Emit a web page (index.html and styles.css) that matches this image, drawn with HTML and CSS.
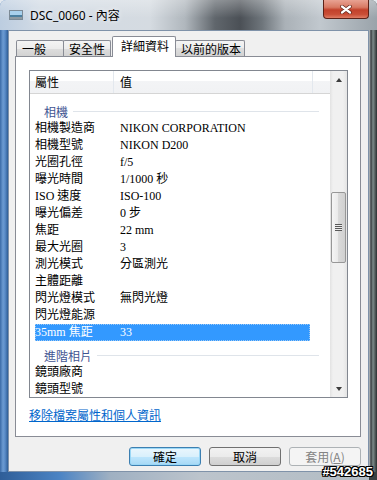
FILE: index.html
```html
<!DOCTYPE html>
<html lang="zh-Hant">
<head>
  <meta charset="UTF-8">
  <title>DSC_0060 - 內容</title>
  <link rel="stylesheet" href="styles.css">
</head>
<body>

<div class="window">
  <div class="titlebar">
    <svg class="title-icon" width="14" height="10" viewBox="0 0 14 10">
      <rect x="0.5" y="0.5" width="13" height="9" fill="#fff" stroke="#7c8a96"/>
      <rect x="1" y="1" width="12" height="4" fill="#a8d0ec"/>
      <rect x="1" y="5" width="12" height="2" fill="#4b7f9f"/>
      <rect x="1" y="7" width="12" height="2" fill="#8e9aa2"/>
    </svg>
    <span class="title">DSC_0060 - 內容</span>
    <button class="close">
      <svg width="12" height="9" viewBox="0 0 12 9">
        <path d="M2 1.5 L10 7.5 M10 1.5 L2 7.5" stroke="#5a1f14" stroke-width="3.6" stroke-linecap="round"/>
        <path d="M2 1.5 L10 7.5 M10 1.5 L2 7.5" stroke="#fff" stroke-width="2.2" stroke-linecap="round"/>
      </svg>
    </button>
  </div>

  <div class="client">
    <div class="tabs">
      <div class="tab">一般</div>
      <div class="tab">安全性</div>
      <div class="tab active">詳細資料</div>
      <div class="tab">以前的版本</div>
    </div>

    <div class="panel">
      <div class="list">
        <div class="list-body">
          <div class="list-head">
            <div class="col col-name">屬性</div>
            <div class="col col-value">值</div>
          </div>
          <div class="group"><span>相機</span></div>
          <div class="row"><span>相機製造商</span><span>NIKON CORPORATION</span></div>
          <div class="row"><span>相機型號</span><span>NIKON D200</span></div>
          <div class="row"><span>光圈孔徑</span><span>f/5</span></div>
          <div class="row"><span>曝光時間</span><span>1/1000 秒</span></div>
          <div class="row"><span>ISO 速度</span><span>ISO-100</span></div>
          <div class="row"><span>曝光偏差</span><span>0 步</span></div>
          <div class="row"><span>焦距</span><span>22 mm</span></div>
          <div class="row"><span>最大光圈</span><span>3</span></div>
          <div class="row"><span>測光模式</span><span>分區測光</span></div>
          <div class="row"><span>主體距離</span><span></span></div>
          <div class="row"><span>閃光燈模式</span><span>無閃光燈</span></div>
          <div class="row"><span>閃光燈能源</span><span></span></div>
          <div class="row selected"><span>35mm 焦距</span><span>33</span></div>
          <div class="group"><span>進階相片</span></div>
          <div class="row"><span>鏡頭廠商</span><span></span></div>
          <div class="row"><span>鏡頭型號</span><span></span></div>
        </div>
        <div class="scrollbar">
          <div class="sb-arrow up"></div>
          <div class="sb-track">
            <div class="sb-thumb"><i></i></div>
          </div>
          <div class="sb-arrow down"></div>
        </div>
      </div>
      <a class="link" href="#">移除檔案屬性和個人資訊</a>
    </div>

    <div class="buttons">
      <button class="btn default">確定</button>
      <button class="btn">取消</button>
      <button class="btn" disabled>套用(<u>A</u>)</button>
    </div>
  </div>

  <div class="frame-bottom"></div>
  <div class="stamp">#542685</div>
</div>

</body>
</html>
```

FILE: styles.css
```css
body {
  margin: 0;
  background: #e4e9ef;
  font-family: "Noto Sans CJK TC", sans-serif;
  font-size: 12px;
  color: #000;
}

.window {
  position: relative;
  width: 377px;
  height: 480px;
  display: flex;
  flex-direction: column;
  border-radius: 6px 6px 0 0;
  overflow: hidden;
  background: linear-gradient(to right,
    #3a6aa6 0, #6c9bd2 3px, #5a8cc8 5px, #2e5d96 8px,
    #9aa6b2 8px, #9aa6b2 369px,
    #c9cfd3 369px, #3a3f41 371px, #7e8c8a 373px, #2c3030 377px);
}

/* Title bar */
.titlebar {
  height: 30px;
  display: flex;
  align-items: center;
  padding-left: 9px;
  background:
    linear-gradient(rgba(255, 255, 255, 0.3), rgba(255, 255, 255, 0) 60%),
    linear-gradient(to right,
      #bccde0 0, #d2dbe5 40px, #d5dbe1 150px, #b0b7bd 185px,
      #60666c 215px, #4b5056 240px, #6e757b 262px, #aab1b7 285px,
      #c1c8ce 320px, #9aa3aa 377px);
}

.title-icon {
  margin-right: 7px;
  margin-top: -1px;
}

.title {
  font-family: "Noto Sans", "Noto Sans CJK TC", sans-serif;
  font-size: 12px;
  text-shadow: 0 0 5px rgba(255, 255, 255, 0.9);
}

.close {
  margin-left: auto;
  margin-right: 8px;
  align-self: flex-start;
  width: 46px;
  height: 19px;
  padding: 0;
  display: flex;
  align-items: center;
  justify-content: center;
  border: 1px solid #5c2218;
  border-top: none;
  border-radius: 0 0 4px 4px;
  background: linear-gradient(#e8a293 0, #d87a64 40%, #c2412b 55%, #c94e36 80%, #df7c64 100%);
}

/* Client area */
.client {
  flex: 1;
  margin: 0 8px;
  display: flex;
  flex-direction: column;
  padding: 5px 7px 0 6px;
  background: #f0f0f0;
  border: 1px solid #7f92a9;
}

.tabs {
  position: relative;
  z-index: 1;
  display: flex;
  align-items: flex-end;
  height: 21px;
  margin: 0 0 -1px 1px;
}

.tab {
  box-sizing: border-box;
  height: 16px;
  line-height: 15px;
  min-width: 48px;
  padding: 0 3px 0 5px;
  margin: 0 -1px 1px 0;
  border: 1px solid #898c95;
  border-bottom: none;
  border-radius: 2px 2px 0 0;
  background: linear-gradient(#f4f4f4, #ececec 50%, #dedede 50%, #d2d2d2);
}

.tab.active {
  height: 21px;
  line-height: 18px;
  padding: 0 6px 0 8px;
  margin: 0 -1px 0 2px;
  background: #fff;
}

.panel {
  box-sizing: border-box;
  height: 381px;
  padding: 13px 12px 0 13px;
  background: #fff;
  border: 1px solid #898c95;
}

/* Property list */
.list {
  box-sizing: border-box;
  height: 328px;
  display: flex;
  border: 1px solid #828790;
}

.list-body {
  flex: 1;
  overflow: hidden;
}

.list-head {
  display: flex;
  height: 22px;
  line-height: 22px;
  border-bottom: 1px solid #d5d5d5;
  background: linear-gradient(#fff 0, #fff 45%, #f3f4f6 45%, #f1f2f4);
}

.col {
  box-sizing: border-box;
  border-right: 1px solid #e3e8ee;
}

.col-name {
  width: 84px;
  padding-left: 5px;
}

.col-value {
  width: 199px;
  padding-left: 6px;
}

.group {
  display: flex;
  align-items: center;
  height: 18px;
  padding-top: 8px;
  margin: 0 11px 0 14px;
  color: #3f5592;
}

.group::after {
  content: "";
  flex: 1;
  height: 1px;
  margin-left: 5px;
  background: #dfe4ea;
}

.row + .group {
  padding-top: 5px;
}

.row {
  display: grid;
  grid-template-columns: 85px 1fr;
  width: 275px;
  height: 17px;
  line-height: 17px;
  margin-left: 5px;
  font-family: "Liberation Serif", "Noto Sans CJK TC", serif;
  white-space: nowrap;
}

.row.selected {
  background: #3399ff;
  color: #fff;
  outline: 1px dotted #9cc8f4;
  outline-offset: -1px;
}

/* Scrollbar */
.scrollbar {
  width: 17px;
  display: flex;
  flex-direction: column;
  background: linear-gradient(to right, #e2e2e2, #f0f0f0 3px, #f0f0f0 13px, #e4e4e4);
}

.sb-arrow {
  height: 17px;
  display: flex;
  align-items: center;
  justify-content: center;
}

.sb-arrow::before {
  content: "";
  border-left: 3.5px solid transparent;
  border-right: 3.5px solid transparent;
}

.sb-arrow.up::before {
  border-bottom: 4px solid #3c3c3c;
}

.sb-arrow.down::before {
  border-top: 4px solid #3c3c3c;
}

.sb-track {
  flex: 1;
  padding-top: 104px;
}

.sb-thumb {
  box-sizing: border-box;
  height: 71px;
  margin: 0 1px;
  display: flex;
  align-items: center;
  justify-content: center;
  border: 1px solid #979797;
  border-radius: 2px;
  background: linear-gradient(to right, #f5f5f5, #e9e9e9 50%, #dadada 50%, #d0d0d0);
}

.sb-thumb i {
  width: 7px;
  height: 7px;
  background: repeating-linear-gradient(#595959 0, #595959 1px, #ececec 1px, #ececec 2px);
}

.link {
  display: block;
  width: fit-content;
  margin-top: 10px;
  line-height: 14px;
  color: #0066cc;
}

/* Dialog buttons */
.buttons {
  display: flex;
  justify-content: flex-end;
  gap: 8px;
  margin-top: 10px;
}

.btn {
  width: 72px;
  height: 19px;
  padding: 0;
  font-family: "Noto Sans CJK TC", sans-serif;
  font-size: 12px;
  line-height: 17px;
  color: #000;
  border: 1px solid #707070;
  border-radius: 3px;
  background: linear-gradient(#f2f2f2, #ebebeb 50%, #dddddd 50%, #cfcfcf);
}

.btn.default {
  border-color: #3c7fb1;
  background: linear-gradient(#eaf6fd, #d9f0fc 50%, #bee6fd 50%, #a7d9f5);
  box-shadow: inset 0 0 0 1px #9ad7f6;
}

.btn:disabled {
  border-color: #adb2b5;
  background: #f4f4f4;
  color: #838383;
}

.frame-bottom {
  height: 8px;
  background: linear-gradient(to right,
    #2f5e98 0, #4c84c4 60px, #9fb0c2 110px, #bcc4cc 200px, #b2bcc4 369px, #3a3f40 369px);
}

.stamp {
  position: absolute;
  right: 4px;
  bottom: 1px;
  font-family: "Liberation Sans", sans-serif;
  font-weight: bold;
  font-size: 13px;
  color: #fff;
  text-shadow: 1px 0 0 #000, -1px 0 0 #000, 0 1px 0 #000, 0 -1px 0 #000,
    1px 1px 0 #000, -1px -1px 0 #000, 1px -1px 0 #000, -1px 1px 0 #000;
}
```
